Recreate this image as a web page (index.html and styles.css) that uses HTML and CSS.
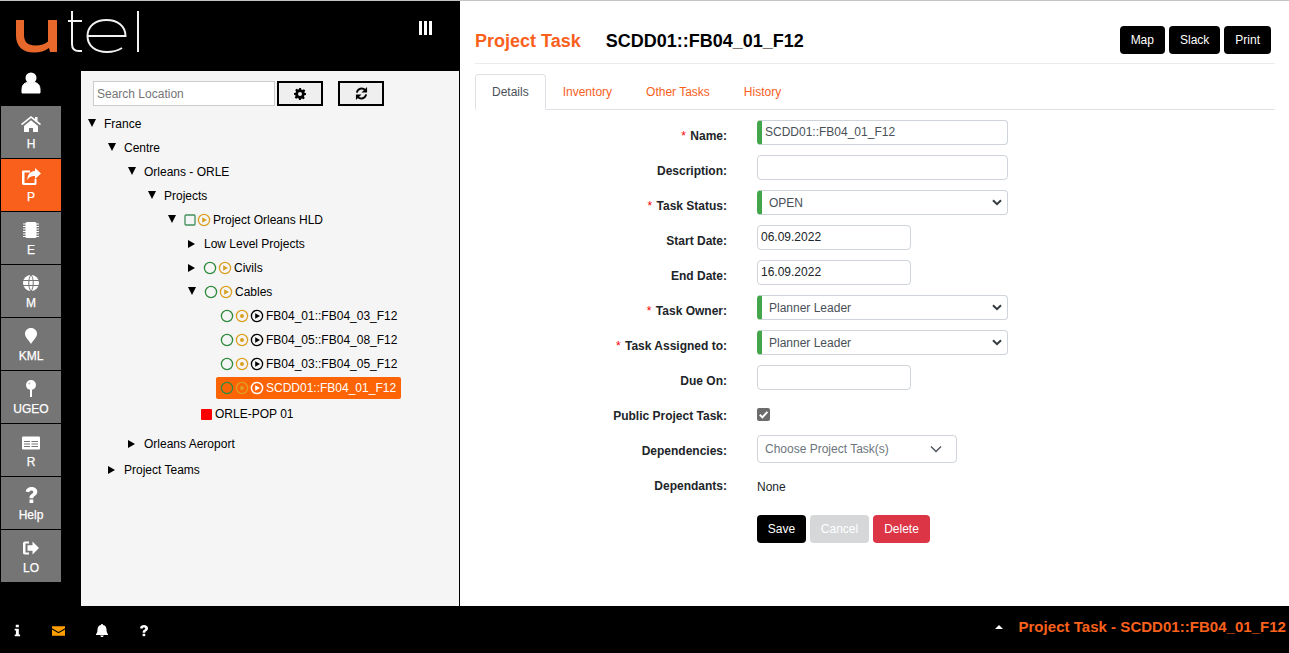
FILE: index.html
```html
<!DOCTYPE html>
<html lang="en">
<head>
<meta charset="utf-8">
<title>Project Task</title>
<link rel="stylesheet" href="styles.css">
</head>
<body>
<svg class="defs" width="0" height="0" aria-hidden="true">
  <defs>
    <symbol id="cg" viewBox="0 0 14 14"><circle cx="7" cy="7" r="5.6" fill="none" stroke="#2e8b3d" stroke-width="1.3"/></symbol>
    <symbol id="sg" viewBox="0 0 14 14"><rect x="2" y="2" width="10" height="10" rx="1" fill="none" stroke="#3f8f5a" stroke-width="1.3"/></symbol>
    <symbol id="py" viewBox="0 0 14 14"><circle cx="7" cy="7" r="5.6" fill="none" stroke="#dba022" stroke-width="1.3"/><path d="M5.2 4.2 10 7l-4.8 2.8z" fill="#dba022"/></symbol>
    <symbol id="dy" viewBox="0 0 14 14"><circle cx="7" cy="7" r="5.6" fill="none" stroke="#dba022" stroke-width="1.3"/><circle cx="7" cy="7" r="2" fill="#dba022"/></symbol>
    <symbol id="pk" viewBox="0 0 14 14"><circle cx="7" cy="7" r="5.6" fill="none" stroke="#000" stroke-width="1.3"/><path d="M5.2 4.2 10 7l-4.8 2.8z" fill="#000"/></symbol>
    <symbol id="pw" viewBox="0 0 14 14"><circle cx="7" cy="7" r="5.6" fill="none" stroke="#fff" stroke-width="1.5"/><path d="M5.2 4.2 10 7l-4.8 2.8z" fill="#fff"/></symbol>
    <symbol id="q" viewBox="0 0 16 20"><path d="M1.500 6.200C2 2.700 4.700 1 8 1c3.500 0 6.500 2 6.500 5.500 0 2.500-1.500 3.700-3 4.600-1.100.7-1.500 1.100-1.500 2.400H5.800c0-2.700.9-3.700 2.400-4.600 1-.6 1.700-1.100 1.700-2.200 0-1.100-.9-1.700-2-1.700-1.300 0-2.100.8-2.400 2z M5.800 15h4.200v4H5.800z" fill="#fff"/></symbol>
  </defs>
</svg>
<div class="topline"></div>
<div class="app">
  <aside class="left">
    <header class="brand">
      <svg class="logo" width="150" height="71" viewBox="0 0 150 71" role="img" aria-label="utel">
        <path d="M16 20h8v15c0 7 4 10.500 11 10.500 6 0 10-1.500 13-4V20h9v32h-7l-1-4c-4 3-9 4.500-15 4.500-11 0-18-6-18-17z" fill="#e8672a"/>
        <g fill="none" stroke="#f2f2f2" stroke-width="2">
          <path d="M72 11v33c0 5 2.500 7 7 7h3M68 21h14"/>
          <path d="M87.500 36h38c0-10-8-16-19-16S87.500 26 87.500 36s8 16 19.500 16c6 0 11-1.500 15-4"/>
          <path d="M138 11v41"/>
        </g>
      </svg>
      <div class="bars" aria-label="Menu"><i></i><i></i><i></i></div>
    </header>
    <div class="lower">
      <nav class="side">
        <div class="user">
          <svg width="20" height="22" viewBox="0 0 20 22"><circle cx="10" cy="6" r="5.500" fill="#fff"/><path d="M1 21v-4c0-4 2.500-6 5-6.500 2.500 1.500 5.500 1.500 8 0 2.500.5 5 2.500 5 6.500v4z" fill="#fff" stroke="#fff" stroke-linejoin="round"/></svg>
        </div>
        <a class="nav"><svg width="20" height="16" viewBox="0 0 20 16"><path d="M10 0 0 8l1 1.300L10 2l9 7.300L20 8l-3.500-2.900V1h-2.500v2zM3 10v6h5v-4h4v4h5v-6l-7-5.700z" fill="#fff"/></svg><span>H</span></a>
        <a class="nav on"><svg width="20" height="18" viewBox="0 0 20 18"><path d="M14 0l6 5.500-6 5.500V8c-4 0-6.500 1-7.500 4.500C6 8 8 3.500 14 3zM2.500 2.500H9v2H3.500v10.500h10v-4h2v4.500c0 1-.8 1.500-1.700 1.500H2.500C1.300 17 1 16 1 15.500V4C1 3 1.500 2.500 2.500 2.500z" fill="#fff"/></svg><span>P</span></a>
        <a class="nav"><svg width="18" height="18" viewBox="0 0 18 18"><rect x="3.500" y="1" width="11" height="16" rx="1.500" fill="#fff"/><path d="M1 3h3M1 5.500h3M1 8h3M1 10.500h3M1 13h3M1 15.500h3M14 3h3M14 5.500h3M14 8h3M14 10.500h3M14 13h3M14 15.500h3" stroke="#fff" stroke-width="1.200"/></svg><span>E</span></a>
        <a class="nav"><svg width="18" height="18" viewBox="0 0 18 18"><circle cx="9" cy="9" r="8" fill="#fff"/><path d="M1 6.500h16M1 11.500h16M9 1c-3 3-3 13 0 16M9 1c3 3 3 13 0 16" fill="none" stroke="#757575" stroke-width="1"/></svg><span>M</span></a>
        <a class="nav"><svg width="14" height="18" viewBox="0 0 14 18"><path d="M7 1c3.500 0 6 2.500 6 5.700C13 10.500 8.800 13.500 7 17 5.200 13.500 1 10.500 1 6.700 1 3.500 3.500 1 7 1z" fill="#fff"/></svg><span>KML</span></a>
        <a class="nav"><svg width="12" height="18" viewBox="0 0 12 18"><circle cx="6" cy="5" r="5" fill="#fff"/><circle cx="4.300" cy="3.500" r="1" fill="#bbb"/><rect x="5" y="9" width="2" height="8" fill="#fff"/></svg><span>UGEO</span></a>
        <a class="nav"><svg width="20" height="15" viewBox="0 0 20 15"><rect x="1" y="2" width="18" height="13" rx="1" fill="#fff"/><path d="M3 7h6M3 9.500h6M3 12h6M10.500 7H17M10.500 9.500H17M10.500 12H17" stroke="#757575" fill="none" stroke-width="1"/></svg><span>R</span></a>
        <a class="nav"><svg width="15" height="19" viewBox="0 0 16 20"><use href="#q"/></svg><span>Help</span></a>
        <a class="nav"><svg width="18" height="15" viewBox="0 0 18 15"><path d="M7 1H3C1.500 1 1 2 1 3v9c0 1 .5 2 2 2h4v-2H3.500V3H7z" fill="#fff"/><path d="M10.500 1 17 7.500 10.500 14v-3.700H5.500V4.700h5z" fill="#fff"/></svg><span>LO</span></a>
      </nav>
      <section class="treepanel">
        <div class="search">
          <input class="searchbox" type="text" placeholder="Search Location">
          <button class="tool"><svg width="12" height="12" viewBox="0 0 12 12"><path d="M5 0h2l.3 1.600 1.200.5L9.900 1.200l1.400 1.400-.9 1.400.5 1.200L12 5v2l-1.600.3-.5 1.200.9 1.400-1.400 1.400-1.400-.9-1.200.5L7 12H5l-.3-1.600-1.200-.5-1.400.9-1.400-1.400.9-1.400-.5-1.200L0 7V5l1.600-.3.500-1.200-.9-1.400 1.400-1.400 1.400.9 1.200-.5zM6 4a2 2 0 1 0 0 4 2 2 0 0 0 0-4z" fill="#000" fill-rule="evenodd"/></svg></button>
          <button class="tool"><svg width="13" height="13" viewBox="0 0 14 14"><path d="M2 6a5.200 5.200 0 0 1 9-2.600M12 8a5.200 5.200 0 0 1-9 2.600" fill="none" stroke="#000" stroke-width="2"/><path d="M13 0v6H7zM1 14V8h6z" fill="#000"/></svg></button>
        </div>
        <ul class="tree">
          <li class="row l0"><b class="tw down"></b>France</li>
          <li class="row l1"><b class="tw down"></b>Centre</li>
          <li class="row l2"><b class="tw down"></b>Orleans - ORLE</li>
          <li class="row l3"><b class="tw down"></b>Projects</li>
          <li class="row l4"><b class="tw down"></b><svg class="ic first"><use href="#sg"/></svg><svg class="ic"><use href="#py"/></svg><span class="tx">Project Orleans HLD</span></li>
          <li class="row l5"><b class="tw right"></b>Low Level Projects</li>
          <li class="row l5"><b class="tw right"></b><svg class="ic lead"><use href="#cg"/></svg><svg class="ic"><use href="#py"/></svg><span class="tx">Civils</span></li>
          <li class="row l5"><b class="tw down"></b><svg class="ic lead"><use href="#cg"/></svg><svg class="ic"><use href="#py"/></svg><span class="tx">Cables</span></li>
          <li class="row l6"><svg class="ic"><use href="#cg"/></svg><svg class="ic"><use href="#dy"/></svg><svg class="ic"><use href="#pk"/></svg><span class="tx">FB04_01::FB04_03_F12</span></li>
          <li class="row l6"><svg class="ic"><use href="#cg"/></svg><svg class="ic"><use href="#dy"/></svg><svg class="ic"><use href="#pk"/></svg><span class="tx">FB04_05::FB04_08_F12</span></li>
          <li class="row l6"><svg class="ic"><use href="#cg"/></svg><svg class="ic"><use href="#dy"/></svg><svg class="ic"><use href="#pk"/></svg><span class="tx">FB04_03::FB04_05_F12</span></li>
          <li class="row l6 sel"><svg class="ic"><use href="#cg"/></svg><svg class="ic"><use href="#dy"/></svg><svg class="ic"><use href="#pw"/></svg><span class="tx">SCDD01::FB04_01_F12</span></li>
          <li class="row pop"><i class="red"></i>ORLE-POP 01</li>
          <li class="row l2 aero"><b class="tw right"></b>Orleans Aeroport</li>
          <li class="row l1 teams"><b class="tw right"></b>Project Teams</li>
        </ul>
      </section>
    </div>
  </aside>
  <main class="content">
    <div class="title">
      <h1><span class="org">Project Task</span><span class="name">SCDD01::FB04_01_F12</span></h1>
      <div class="actions"><button class="btn blk">Map</button><button class="btn blk">Slack</button><button class="btn blk">Print</button></div>
    </div>
    <div class="tabs">
      <a class="tab active">Details</a><a class="tab">Inventory</a><a class="tab">Other Tasks</a><a class="tab">History</a>
    </div>
    <form class="form">
      <label class="lb"><em>*</em> Name:</label>
      <div class="ctl"><input class="fc wide req" type="text" value="SCDD01::FB04_01_F12"></div>
      <label class="lb">Description:</label>
      <div class="ctl"><input class="fc wide" type="text"></div>
      <label class="lb"><em>*</em> Task Status:</label>
      <div class="ctl"><select class="fc wide req sl"><option>OPEN</option></select></div>
      <label class="lb">Start Date:</label>
      <div class="ctl"><input class="fc date" type="text" value="06.09.2022"></div>
      <label class="lb">End Date:</label>
      <div class="ctl"><input class="fc date" type="text" value="16.09.2022"></div>
      <label class="lb"><em>*</em> Task Owner:</label>
      <div class="ctl"><select class="fc wide req sl"><option>Planner Leader</option></select></div>
      <label class="lb"><em>*</em> Task Assigned to:</label>
      <div class="ctl"><select class="fc wide req sl"><option>Planner Leader</option></select></div>
      <label class="lb">Due On:</label>
      <div class="ctl"><input class="fc date" type="text"></div>
      <label class="lb">Public Project Task:</label>
      <div class="ctl"><span class="check"><svg width="13" height="13" viewBox="0 0 13 13"><path d="M2.800 6.800 5.400 9.400 10.400 3.800" fill="none" stroke="#fff" stroke-width="2"/></svg></span></div>
      <label class="lb">Dependencies:</label>
      <div class="ctl"><div class="multi"><span>Choose Project Task(s)</span><svg width="12" height="8" viewBox="0 0 12 8"><path d="M1 1.500 6 6.500 11 1.500" fill="none" stroke="#495057" stroke-width="1.300"/></svg></div></div>
      <label class="lb">Dependants:</label>
      <div class="ctl none">None</div>
      <div class="spacer"></div>
      <div class="ctl btns"><button type="button" class="btn blk big">Save</button><button type="button" class="btn gray big">Cancel</button><button type="button" class="btn red2 big">Delete</button></div>
    </form>
  </main>
</div>
<footer class="foot">
  <div class="foot-ic">
    <svg width="7" height="13" viewBox="0 0 8 13"><path d="M2 0h3.500v2.800H2zM.8 4.500h4.700V11H7v2H.8v-2h1.400V6.500H.8z" fill="#fff"/></svg>
    <svg width="13" height="10" viewBox="0 0 14 10"><path d="M0 0h14v2L7 6 0 2zM0 3.500 7 7.500l7-4V10H0z" fill="#ffa000"/></svg>
    <svg width="12" height="13" viewBox="0 0 12 13"><path d="M6 0c.6 0 1 .4 1 1 2.400.4 3.500 2.200 3.500 4.500 0 2.500.5 3.500 1.500 4.700V11H0v-.8C1 9 1.500 8 1.500 5.500 1.500 3.200 2.600 1.400 5 1c0-.6.4-1 1-1zM4.300 11.500h3.400C7.500 12.500 6.800 13 6 13s-1.500-.5-1.700-1.500z" fill="#fff"/></svg>
    <svg width="10" height="13" viewBox="0 0 16 20"><use href="#q"/></svg>
  </div>
  <div class="crumb"><i class="up"></i><span>Project Task - SCDD01::FB04_01_F12</span></div>
</footer>
</body>
</html>
```
FILE: styles.css
```css
* { box-sizing: border-box; }
html, body { margin: 0; height: 100%; }
body { width: 1289px; height: 653px; overflow: hidden; background: #fff; display: flex; flex-direction: column; font: 12px "Liberation Sans", Arial, sans-serif; color: #212529; }
.defs { position: absolute; }
.topline { height: 1px; background: #c4c4c4; flex: none; }
.app { flex: 1; display: flex; min-height: 0; }
.left { width: 460px; flex: none; background: #000; display: flex; flex-direction: column; }
.brand { height: 70px; flex: none; display: flex; justify-content: space-between; }
.logo { display: block; margin-top: -1px; }
.bars { display: flex; gap: 2px; margin: 20px 28px 0 0; height: 14px; }
.bars i { width: 3px; height: 14px; background: #fff; }
.lower { flex: 1; display: flex; min-height: 0; }
.side { width: 81px; flex: none; padding-left: 1px; }
.user { height: 35px; width: 60px; display: flex; justify-content: center; padding-top: 1px; }
.nav { display: flex; flex-direction: column; align-items: center; width: 60px; height: 52px; margin-bottom: 1px; background: #757575; color: #fff; font-size: 12px; padding-top: 9px; }
.nav svg { height: 18px; display: block; }
.nav span { margin-top: 4px; line-height: 14px; -webkit-text-stroke: 0.25px #fff; }
.nav.on { background: #f9601c; }
.treepanel { width: 378px; flex: none; background: #f5f5f5; padding: 10px 0 0 12px; }
.search { display: flex; height: 25px; }
.searchbox { width: 182px; height: 25px; border: 1px solid #ccc; background: #fff; padding: 0 3px; font: 12px "Liberation Sans", Arial, sans-serif; color: #333; outline: 0; }
.searchbox::placeholder { color: #757575; opacity: 1; }
.tool { width: 46px; height: 25px; border: 2px solid #000; background: #efefef; padding: 0; margin-left: 2px; display: flex; align-items: center; justify-content: center; }
.tool + .tool { margin-left: 15px; }
.tree { list-style: none; margin: 6px 0 0 -12px; padding: 0; }
.row { height: 24px; display: flex; align-items: center; color: #000; }
.tw { width: 0; height: 0; flex: none; }
.tw.down { border-left: 4px solid transparent; border-right: 4px solid transparent; border-top: 8px solid #000; margin-top: -2px; margin-right: 8px; width: 8px; }
.tw.right { border-top: 4px solid transparent; border-bottom: 4px solid transparent; border-left: 7px solid #000; margin-top: -1px; margin-right: 9px; width: 7px; }
.l0 { padding-left: 7px; }
.l1 { padding-left: 27px; }
.l2 { padding-left: 47px; }
.l3 { padding-left: 67px; }
.l4 { padding-left: 87px; }
.l5 { padding-left: 107px; }
.l6 { margin-left: 135px; padding-left: 4px; width: 185px; }
.sel { background: #fc6405; color: #fff; border-radius: 2px; height: 22px; margin-top: 1px; margin-bottom: 1px; }
.ic { width: 14px; height: 14px; flex: none; margin-right: 1px; }
.ic.first { margin-left: -1px; margin-right: 0; }
.ic.lead { margin-left: -1px; }
.down + .ic.lead { margin-left: 0; }
.tx { margin-left: 1px; }
.pop { padding-left: 120px; height: 28px; margin-top: 1px; }
.red { width: 11px; height: 11px; background: #f00; border-radius: 1px; margin-right: 3px; flex: none; }
.aero { height: 32px; }
.teams { height: 20px; }
.content { flex: 1; min-width: 0; padding: 0 14px 0 15px; background: #fff; }
.title { height: 63px; border-bottom: 1px solid #e9ecef; display: flex; justify-content: space-between; align-items: flex-start; padding-top: 25px; padding-right: 4px; }
h1 { margin: 4px 0 0; font-size: 18px; line-height: 22px; font-weight: 700; color: #000; display: flex; }
.org { color: #f9601c; margin-right: 25px; }
.actions { display: flex; gap: 4px; }
.btn { border: 0; border-radius: 4px; color: #fff; font: 12px "Liberation Sans", Arial, sans-serif; padding: 0; height: 28px; }
.blk { background: #000; }
.actions .btn { padding: 0 11px; }
.tabs { display: flex; height: 36px; margin-top: 10px; border-bottom: 1px solid #dee2e6; }
.tab { height: 36px; line-height: 35px; padding: 0 16px; color: #f9601c; border: 1px solid transparent; border-radius: 4px 4px 0 0; }
.tab.active { color: #495057; background: #fff; border-color: #dee2e6 #dee2e6 #fff; }
.form { display: grid; grid-template-columns: 252px 1fr; column-gap: 30px; margin-top: 10px; }
.lb { height: 35px; padding-top: 5px; text-align: right; font-weight: 700; color: #212529; line-height: 22px; }
.lb em { color: #f00; font-style: normal; font-weight: 400; margin-right: 1px; }
.ctl { height: 35px; }
.fc { display: block; height: 25px; border: 1px solid #ced4da; border-radius: 4px; background: #fff; padding: 0 3px 2px; font: 12px "Liberation Sans", Arial, sans-serif; color: #495057; outline: 0; }
.wide { width: 251px; }
.date { width: 154px; color: #212529; }
.req { border-left: 5px solid #44a64a; }
.sl { appearance: none; -webkit-appearance: none; padding: 0 0 0 7px; background-image: url("data:image/svg+xml,%3Csvg xmlns='http://www.w3.org/2000/svg' width='10' height='7' viewBox='0 0 10 7'%3E%3Cpath d='M1 1.200 5 5.200 9 1.200' fill='none' stroke='%23343a40' stroke-width='2'/%3E%3C/svg%3E"); background-repeat: no-repeat; background-position: right 5px center; }
.check { display: flex; width: 13px; height: 13px; margin-top: 8px; background: #6c6c6c; border-radius: 2px; }
.multi { width: 200px; height: 28px; border: 1px solid #ced4da; border-radius: 4px; display: flex; justify-content: space-between; align-items: center; padding: 0 14px 0 7px; color: #6c757d; background: #fff; }
.none { padding-top: 10px; height: 45px; line-height: 15px; }
.spacer { height: 28px; }
.btns { display: flex; gap: 4px; height: 28px; }
.big { height: 28px; }
.big:nth-child(1) { width: 49px; }
.big:nth-child(2) { width: 59px; }
.big:nth-child(3) { width: 57px; }
.gray { background: #d5d7d9; }
.red2 { background: #dc3545; }
.foot { height: 47px; flex: none; background: #000; margin-top: auto; display: flex; justify-content: space-between; align-items: center; padding: 0 3px 0 14px; }
.foot-ic { display: flex; align-items: center; gap: 31px; padding-top: 2px; }
.crumb { display: flex; align-items: center; color: #f9601c; font-weight: 700; font-size: 15px; letter-spacing: 0.03px; margin-top: -6px; }
.up { width: 0; height: 0; border-left: 4px solid transparent; border-right: 4px solid transparent; border-bottom: 4px solid #fff; margin-right: 15px; }
```
